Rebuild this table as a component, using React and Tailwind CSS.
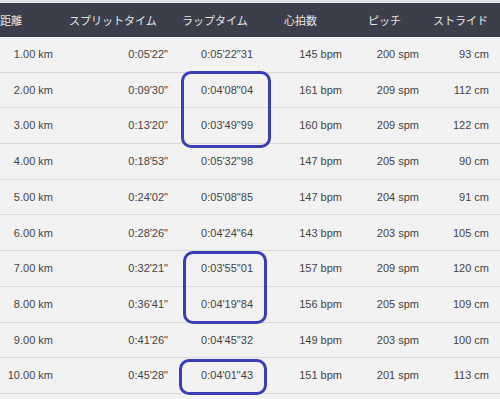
import React from "react";

const rows = [
  ["1.00 km", "0:05'22\"", "0:05'22\"31", "145 bpm", "200 spm", "93 cm"],
  ["2.00 km", "0:09'30\"", "0:04'08\"04", "161 bpm", "209 spm", "112 cm"],
  ["3.00 km", "0:13'20\"", "0:03'49\"99", "160 bpm", "209 spm", "122 cm"],
  ["4.00 km", "0:18'53\"", "0:05'32\"98", "147 bpm", "205 spm", "90 cm"],
  ["5.00 km", "0:24'02\"", "0:05'08\"85", "147 bpm", "204 spm", "91 cm"],
  ["6.00 km", "0:28'26\"", "0:04'24\"64", "143 bpm", "203 spm", "105 cm"],
  ["7.00 km", "0:32'21\"", "0:03'55\"01", "157 bpm", "209 spm", "120 cm"],
  ["8.00 km", "0:36'41\"", "0:04'19\"84", "156 bpm", "205 spm", "109 cm"],
  ["9.00 km", "0:41'26\"", "0:04'45\"32", "149 bpm", "203 spm", "100 cm"],
  ["10.00 km", "0:45'28\"", "0:04'01\"43", "151 bpm", "201 spm", "113 cm"],
];

// column widths: 60 / 120 / 90 / 80 / 80 / 70
const grid = "grid grid-cols-[60px_120px_90px_80px_80px_70px]";
const cellPad = ["pr-[7px]", "pr-[12px]", "pr-[17px]", "pr-[8px]", "pr-[11px]", "pr-[11px]"];

export default function App() {
  return (
    <div
      className="relative w-[500px] h-[399px] overflow-hidden bg-[#f2f2f2] text-[11px] text-[#444]"
      style={{ fontFamily: '"Liberation Sans", Arial, "Noto Sans CJK JP", sans-serif' }}
    >
      <div className="h-[3px] bg-[#e4e4e4]" />

      {/* header */}
      <div className={`${grid} h-[34px] items-center bg-[#3c3f4b] text-[#e6e6e6] text-[11px]`}
        style={{ fontFamily: '"Noto Sans CJK JP", sans-serif' }}>
        <div className="pl-0">距離</div>
        <div className="pl-[9px]">スプリットタイム</div>
        <div className="pl-[2px]">ラップタイム</div>
        <div className="pl-[14px]">心拍数</div>
        <div className="pl-[18px]">ピッチ</div>
        <div className="pl-[3px]">ストライド</div>
      </div>

      {/* body */}
      <div>
        {rows.map((r) => (
          <div key={r[0]} className={`${grid} h-[35.7px] items-center border-b border-[#d9d9d9]`}>
            {r.map((c, i) => (
              <div key={i} className={`text-right ${cellPad[i]}`}>{c}</div>
            ))}
          </div>
        ))}
      </div>

      {/* annotation boxes */}
      <div className="absolute left-[181px] top-[71px] w-[90px] h-[77px] rounded-[10px] border-[3px] border-[#3a3db5]" />
      <div className="absolute left-[183px] top-[251px] w-[84px] h-[73px] rounded-[10px] border-[3px] border-[#3a3db5]" />
      <div className="absolute left-[179px] top-[359px] w-[88px] h-[36px] rounded-[10px] border-[3px] border-[#3a3db5]" />
    </div>
  );
}
